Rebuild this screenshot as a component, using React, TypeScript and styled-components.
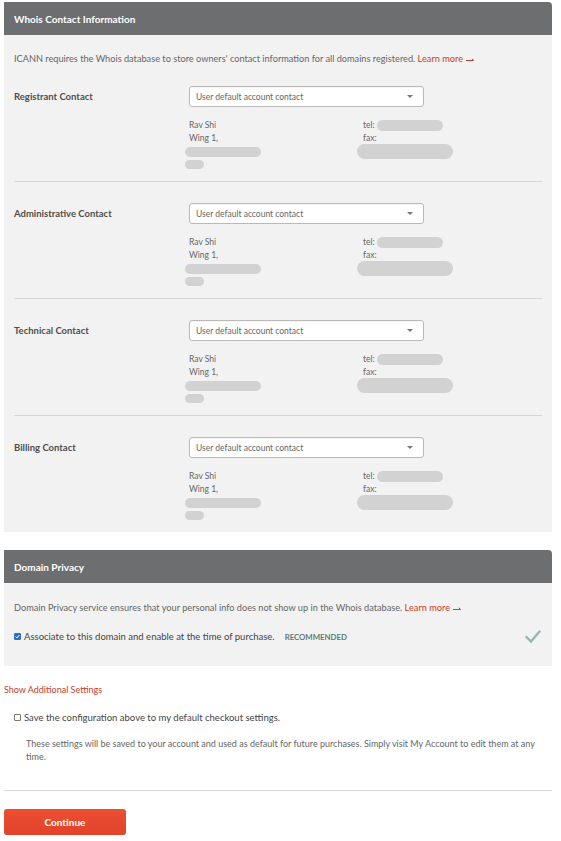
import React from "react";
import styled, { createGlobalStyle } from "styled-components";

const Global = createGlobalStyle`
  html, body { margin: 0; padding: 0; background: #fff; }
  body { font-family: Lato, "Open Sans", "Liberation Sans", sans-serif; color: #555; }
  * { box-sizing: border-box; }
`;

const Page = styled.div`
  width: 561px;
  padding: 2px 9px 0 4px;
  display: flex;
  flex-direction: column;
`;

const Panel = styled.section<{ $mt?: number }>`
  margin-top: ${(p) => p.$mt ?? 0}px;
  background: #f2f2f2;
  border-top-right-radius: 4px;
  overflow: hidden;
`;

const PanelHeader = styled.div`
  height: 33px;
  background: #6d6e70;
  color: #fff;
  font-weight: 700;
  font-size: 10px;
  display: flex;
  align-items: center;
  padding: 0 10px;
`;

const PanelBody = styled.div<{ $pb?: number }>`
  padding: 0 10px ${(p) => p.$pb ?? 0}px;
`;

const Intro = styled.p<{ $pt?: number }>`
  margin: 0;
  padding-top: ${(p) => p.$pt ?? 17}px;
  font-size: 9.2px;
  line-height: 13px;
  color: #666;
`;

const LearnMore = styled.a`
  color: #c9402a;
  text-decoration: none;
`;

const ContactRow = styled.div`
  display: grid;
  grid-template-columns: 175px 235px;
  padding: 21px 0 10px;
  border-bottom: 1px solid #d6d6d6;
  &:last-child { border-bottom: none; }
`;

const Label = styled.div`
  font-size: 9.5px;
  font-weight: 700;
  color: #4f4f4f;
  height: 21px;
  display: flex;
  align-items: center;
`;

const Select = styled.div`
  height: 21px;
  background: #fff;
  border: 1px solid #b9b9b9;
  border-radius: 3px;
  display: flex;
  align-items: center;
  justify-content: space-between;
  padding: 0 10px 0 6px;
  font-size: 8.5px;
  color: #666;
  box-shadow: inset 0 1px 1px rgba(0,0,0,0.04);
`;

const Caret = styled.span`
  width: 0;
  height: 0;
  border-left: 3px solid transparent;
  border-right: 3px solid transparent;
  border-top: 3px solid #777;
`;

const Info = styled.div`
  grid-column: 2 / 4;
  margin-top: 12px;
  display: grid;
  grid-template-columns: 174px 1fr;
  width: 300px;
`;

const InfoCol = styled.div`
  display: flex;
  flex-direction: column;
  font-size: 8.5px;
  line-height: 13px;
  color: #666;
`;

const Line = styled.div`
  height: 13px;
  display: flex;
  align-items: center;
  gap: 2px;
  position: relative;
`;

const Blur = styled.span<{ $w: number; $h: number; $x?: number }>`
  display: inline-block;
  width: ${(p) => p.$w}px;
  height: ${(p) => p.$h}px;
  margin-left: ${(p) => p.$x ?? 0}px;
  background: #d2d2d2;
  border-radius: ${(p) => p.$h / 2}px;
  filter: blur(0.6px);
`;

const FaxBlur = styled(Blur)`
  position: absolute;
  left: -6px;
  top: 12px;
`;

const CheckLine = styled.label`
  display: flex;
  align-items: center;
  margin-top: 16px;
  font-size: 9.5px;
  color: #444;
  height: 13px;
`;

const Box = styled.span<{ $checked?: boolean }>`
  width: 7px;
  height: 7px;
  margin-right: 3px;
  border: 1px solid ${(p) => (p.$checked ? "#2d6fc4" : "#777")};
  background: ${(p) => (p.$checked ? "#2d6fc4" : "#fff")};
  border-radius: 1px;
  display: inline-flex;
  align-items: center;
  justify-content: center;
`;

const Recommended = styled.span`
  margin-left: 10px;
  font-size: 7.8px;
  font-weight: 700;
  color: #5f7a7a;
`;

const Tick = styled.svg`
  margin-left: auto;
  margin-right: 1px;
`;

const ShowMore = styled.a`
  margin-top: 17px;
  font-size: 9px;
  line-height: 13px;
  color: #c9402a;
`;

const SaveBlock = styled.div`
  padding: 15px 0 0 10px;
  display: flex;
  flex-direction: column;
`;

const SaveLine = styled.label`
  display: flex;
  align-items: center;
  font-size: 9.5px;
  color: #444;
  height: 13px;
`;

const SaveNote = styled.p`
  margin: 13px 0 0 12px;
  font-size: 9px;
  line-height: 13px;
  color: #666;
`;

const Rule = styled.hr`
  margin: 27px 0 0;
  border: none;
  border-top: 1px solid #d6d6d6;
`;

const Button = styled.button`
  margin-top: 18px;
  width: 122px;
  height: 26px;
  border: none;
  border-radius: 3px;
  background: linear-gradient(#ec4f31, #e0432a);
  color: #fff;
  font-family: inherit;
  font-weight: 700;
  font-size: 10px;
  cursor: pointer;
`;

type Contact = { label: string };
const contacts: Contact[] = [
  { label: "Registrant Contact" },
  { label: "Administrative Contact" },
  { label: "Technical Contact" },
  { label: "Billing Contact" },
];

const Arrow = () => (
  <svg width="9" height="6" viewBox="0 0 9 6" style={{ marginLeft: 3, verticalAlign: "middle" }}>
    <path d="M0 3.5 H7.5 M5.8 1.8 L7.8 3.5" stroke="#c9402a" strokeWidth="1" fill="none" />
  </svg>
);

export default function App() {
  return (
    <>
      <Global />
      <Page>
        <Panel>
          <PanelHeader>Whois Contact Information</PanelHeader>
          <PanelBody>
            <Intro>
              ICANN requires the Whois database to store owners' contact information for all domains registered.{" "}
              <LearnMore>Learn more<Arrow /></LearnMore>
            </Intro>
            {contacts.map((c) => (
              <ContactRow key={c.label}>
                <Label>{c.label}</Label>
                <Select>
                  User default account contact
                  <Caret />
                </Select>
                <Info>
                  <InfoCol>
                    <Line>Rav Shi</Line>
                    <Line>Wing 1,</Line>
                    <Line><Blur $w={76} $h={10} $x={-4} /></Line>
                    <Line><Blur $w={19} $h={9} $x={-4} /></Line>
                  </InfoCol>
                  <InfoCol>
                    <Line>tel: <Blur $w={66} $h={11} $x={0} /></Line>
                    <Line>fax:<FaxBlur $w={96} $h={15} /></Line>
                  </InfoCol>
                </Info>
              </ContactRow>
            ))}
          </PanelBody>
        </Panel>

        <Panel $mt={18}>
          <PanelHeader>Domain Privacy</PanelHeader>
          <PanelBody $pb={23}>
            <Intro $pt={18}>
              Domain Privacy service ensures that your personal info does not show up in the Whois database.{" "}
              <LearnMore>Learn more<Arrow /></LearnMore>
            </Intro>
            <CheckLine>
              <Box $checked>
                <svg width="5" height="5" viewBox="0 0 5 5">
                  <path d="M0.6 2.6 L2 3.9 L4.4 1" stroke="#fff" strokeWidth="1" fill="none" />
                </svg>
              </Box>
              Associate to this domain and enable at the time of purchase.
              <Recommended>RECOMMENDED</Recommended>
              <Tick width="16" height="13" viewBox="0 0 16 13">
                <path d="M1.5 7 L6 11.5 L14.5 1.5" stroke="#8fb9b6" strokeWidth="2.4" fill="none" strokeLinecap="round" />
              </Tick>
            </CheckLine>
          </PanelBody>
        </Panel>

        <ShowMore>Show Additional Settings</ShowMore>
        <SaveBlock>
          <SaveLine>
            <Box />
            Save the configuration above to my default checkout settings.
          </SaveLine>
          <SaveNote>
            These settings will be saved to your account and used as default for future purchases. Simply visit My Account to edit them at any time.
          </SaveNote>
        </SaveBlock>
        <Rule />
        <Button>Continue</Button>
      </Page>
    </>
  );
}
